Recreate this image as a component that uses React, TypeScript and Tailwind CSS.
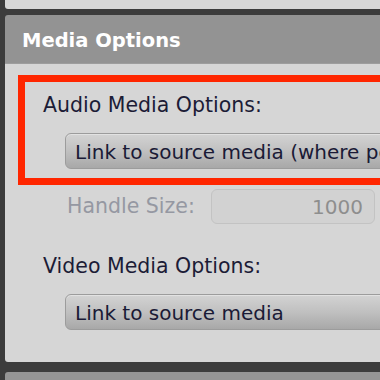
import React from 'react';

const Dropdown = ({ label, className }: { label: string; className?: string }) => (
  <div
    className={`h-[36px] w-[400px] rounded-[6px] border border-[#9c9c9c] bg-gradient-to-b from-[#d3d3d3] via-[#c0c0c0] to-[#a8a8a8] pl-[9px] pt-[2px] flex items-center whitespace-nowrap text-[20px] text-[#1a1a36] shadow-[inset_0_1px_0_#e2e2e2] ${className ?? ''}`}
  >
    {label}
  </div>
);

const App = () => {
  return (
    <div className="w-[380px] h-[380px] overflow-hidden bg-[#3c3c3c] pl-[5px] flex flex-col font-['DejaVu_Sans',sans-serif]">
      {/* previous panel, cut off */}
      <div className="h-[9px] w-[400px] shrink-0 bg-[#d7d7d7] rounded-bl-[3px]" />

      {/* Media Options panel */}
      <div className="mt-[6px] w-[400px] shrink-0 rounded-l-[3px] overflow-hidden">
        <div className="h-[49px] bg-[#939393] border-b border-[#9d9d9d] flex items-center pl-[17px] pt-[3px] text-white font-bold text-[19.5px]">
          Media Options
        </div>

        <div className="h-[298px] bg-[#d6d6d6] pt-[11px] pl-[13px]">
          {/* highlighted audio options */}
          <div className="border-[7px] border-[#ff2600] pt-[11px] pb-[9px] pl-[18px]">
            <div className="text-[20.5px] leading-[24px] text-[#1c1c36] whitespace-nowrap">Audio Media Options:</div>
            <Dropdown label="Link to source media (where possible)" className="mt-[16px] ml-[22px]" />
          </div>

          <div className="mt-[4px] flex items-center">
            <div className="ml-[49px] w-[144px] text-[20.5px] text-[#9598a2] whitespace-nowrap">Handle Size:</div>
            <div className="w-[164px] h-[35px] rounded-[6px] border border-[#c3c3c3] bg-[#d2d2d2] flex items-center justify-end pr-[11px] text-[20px] text-[#8e8e8e]">
              1000
            </div>
          </div>

          <div className="mt-[30px] ml-[25px] text-[20.5px] leading-[24px] text-[#1c1c36] whitespace-nowrap">
            Video Media Options:
          </div>
          <Dropdown label="Link to source media" className="mt-[16px] ml-[47px]" />
        </div>
      </div>

      {/* next panel header */}
      <div className="mt-[10px] w-[400px] flex-1 bg-[#959595] rounded-tl-[3px]" />
    </div>
  );
};

export default App;
